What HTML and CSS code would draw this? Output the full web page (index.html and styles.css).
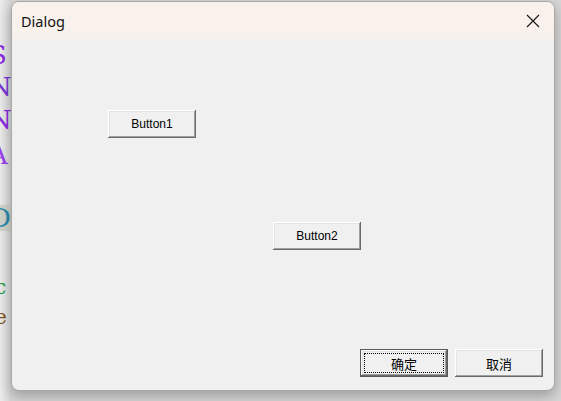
FILE: index.html
```html
<!DOCTYPE html>
<html>
<head>
<meta charset="utf-8">
<link rel="stylesheet" href="styles.css">
</head>
<body>
<div class="backdrop">
  <div class="bl l1">S</div>
  <div class="bl l2">N</div>
  <div class="bl l3">N</div>
  <div class="bl l4">A</div>
  <div class="bl l5">D</div>
  <div class="bl l6">c</div>
  <div class="bl l7">e</div>
</div>
<div class="dialog">
  <div class="titlebar">
    <span class="title">Dialog</span>
    <span class="close">
      <svg width="14" height="14" viewBox="0 0 14 14"><path d="M1 1 L13 13 M13 1 L1 13" stroke="#1a1a1a" stroke-width="1.2" fill="none"/></svg>
    </span>
  </div>
  <div class="body">
    <button class="btn b1">Button1</button>
    <button class="btn b2">Button2</button>
    <div class="footer">
      <button class="btn default cjk"><span class="focus">确定</span></button>
      <button class="btn cjk">取消</button>
    </div>
  </div>
</div>
</body>
</html>
```
FILE: styles.css
```css
html, body { margin: 0; padding: 0; }
body {
  width: 561px;
  height: 401px;
  overflow: hidden;
  background: linear-gradient(to right, #ececec 0, #d6d6d6 11px);
  position: relative;
}
.backdrop {
  position: absolute;
  left: -11px;
  top: 40px;
  font-family: "DejaVu Serif", serif;
  font-weight: 300;
  font-size: 26px;
  line-height: 26px;
}
.bl { position: absolute; left: 0; }
.l1 { top: 2px; color: #8a2be2; }
.l2 { top: 34px; color: #7a3ad8; }
.l3 { top: 67px; color: #8a2be2; }
.l4 { top: 102px; color: #9a40f0; }
.l5 { top: 165px; color: #2a8ab0; background: #d0d3c8; padding: 0 1px; }
.l6 { top: 234px; left: 6px; font-size: 20px; color: #1a9a40; }
.l7 { top: 264px; left: 6px; font-size: 20px; color: #805020; }
.dialog {
  position: absolute;
  left: 11px;
  top: 1px;
  width: 542px;
  height: 388px;
  border: 1px solid #a8a8a8;
  border-radius: 8px;
  background: #f0f0f0;
  box-shadow: 0 5px 14px rgba(0,0,0,0.28);
  overflow: hidden;
  display: flex;
  flex-direction: column;
}
.titlebar {
  height: 37px;
  flex: none;
  background: #f9f1ec;
  display: flex;
  align-items: center;
  justify-content: space-between;
  padding: 0 14px 0 9px;
  font-family: "Noto Sans", sans-serif;
  font-size: 14.5px;
  color: #111;
}
.close { display: flex; }
.body {
  flex: 1;
  display: flex;
  flex-direction: column;
  align-items: flex-start;
}
.btn {
  width: 88px;
  height: 28px;
  padding: 0;
  border: none;
  background: #f0f0f0;
  box-shadow: inset -1px -1px #696969, inset 1px 1px #ffffff, inset -2px -2px #a0a0a0, inset 2px 2px #e3e3e3;
  font-family: "Liberation Sans", sans-serif;
  font-size: 12px;
  color: #000;
}
.b1 { margin: 71px 0 0 96px; }
.b2 { margin: 84px 0 0 261px; }
.footer {
  margin-top: auto;
  align-self: stretch;
  display: flex;
  justify-content: flex-end;
  gap: 7px;
  padding: 0 11px 13px 0;
}
.cjk {
  font-family: "Noto Sans CJK SC", sans-serif;
  font-size: 13px;
}
.default {
  border: 1px solid #5a5a5a;
  display: flex;
  align-items: stretch;
  justify-content: stretch;
  padding: 3px;
}
.focus {
  flex: 1;
  border: 1px dotted #000;
  display: flex;
  align-items: center;
  justify-content: center;
}
```
